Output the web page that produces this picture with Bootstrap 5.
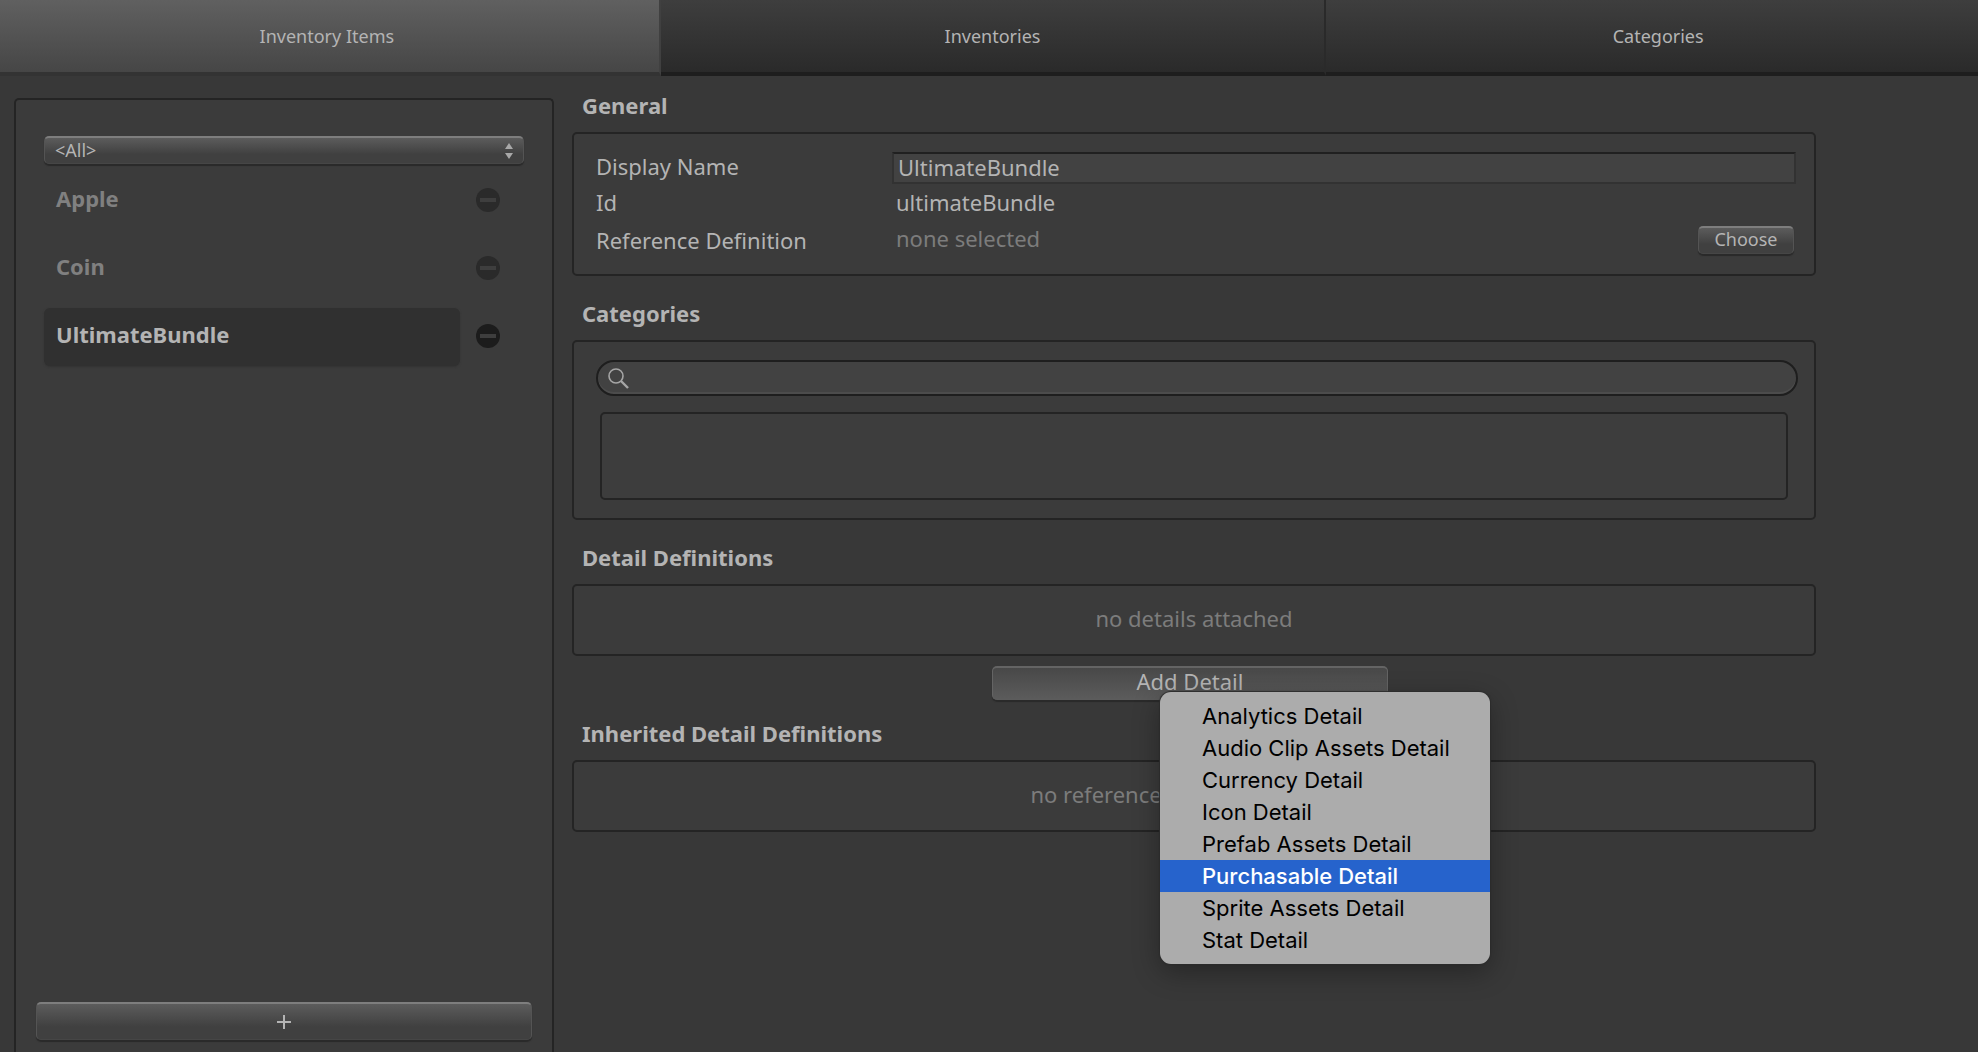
<!DOCTYPE html>
<html lang="en">
<head>
<meta charset="utf-8">
<meta name="viewport" content="width=device-width, initial-scale=1">
<title>Inventory Items</title>
<link href="https://cdn.jsdelivr.net/npm/bootstrap@5.3.0/dist/css/bootstrap.min.css" rel="stylesheet">
<style>
  body { background: #383838; color: #b4b4b4; font-family: "Noto Sans", "Open Sans", sans-serif; font-size: 22px; line-height: 32px; }
  .editor { height: 100vh; }

  /* top tabs */
  .tabbar { margin: 0 -14px 0 -5px; }
  .tabbar .tab-btn { height: 76px; padding: 0; border: 0; border-right: 2px solid #2a2a2a; border-bottom: 4px solid #1e1e1e; color: #b4b4b4; font-size: 18px; line-height: 24px; background: linear-gradient(#3e3e3e, #2a2a2a); }
  .tabbar .tab-btn.active { background: linear-gradient(#606060, #464646); border-right-color: #404040; border-bottom-color: #333; }

  /* framed areas */
  .frame { background: #3b3b3b; border: 2px solid #242424; border-radius: 5px; }
  .sidebar { width: 540px; margin: 22px 18px 0 14px; padding: 36px 20px 12px; border-bottom: 0; border-radius: 5px 5px 0 0; }
  .detail-col { max-width: 1244px; margin-right: 20px; padding-top: 14px; }
  .sect-title { font-size: 22px; line-height: 30px; font-weight: 700; margin: 0 0 12px 10px; }
  .sect { margin-bottom: 22px; }

  /* bevelled controls */
  .bevel { color: #b4b4b4; background: linear-gradient(#5c5c5c, #404040 65%, #404040); border: 1px solid #545454; border-top: 2px solid #7e7e7e; border-bottom-color: #464646; border-radius: 5px; box-shadow: 0 2px 1px #2a2a2a; padding: 0; }
  .bevel:hover { color: #ccc; border-color: #545454; border-top-color: #7e7e7e; }
  .filter { margin: 0 8px 8px; }
  .filter select { height: 28px; padding: 0 10px 2px; font-size: 18px; line-height: 22px; appearance: none; }
  .filter svg { right: 10px; top: 7px; pointer-events: none; }

  .entry { padding: 0 32px 0 8px; margin-bottom: 10px; }
  .entry-name { height: 58px; padding: 0 0 6px 12px; border: 0; border-radius: 6px; background: none; color: #808080; font-weight: 700; text-align: left; margin-right: 16px; }
  .entry-del { border: 0; padding: 0 0 2px; background: none; color: #2a2a2a; line-height: 0; }
  .entry-del line { stroke: #3e3e3e; }
  .entry.selected .entry-name { background: #303030; color: #b4b4b4; box-shadow: 0 1px 2px #333; }
  .entry.selected .entry-del { color: #1c1c1c; }
  .add-item { height: 38px; }

  /* general form */
  .form-frame { padding: 18px 18px 14px 22px; }
  .field-label { width: 296px; flex: none; }
  .field-row { height: 36px; }
  .field-row.first { height: 32px; }
  .field-row.last { height: 40px; }
  .name-input { height: 32px; padding: 0 4px 2px; border: 2px solid #323232; border-top-color: #202020; border-radius: 0; background: #424242; color: #b4b4b4; font-size: 22px; line-height: 26px; }
  .choose { width: 96px; height: 28px; margin-right: 2px; padding-bottom: 4px; font-size: 18px; line-height: 20px; }
  .faint { color: #7c7c7c; }

  /* categories */
  .cat-frame { padding: 18px 16px 18px 22px; }
  .search { height: 36px; border: 2px solid #1e1e1e; border-radius: 18px; background: #424242; box-shadow: inset 0 -2px 0 #4c4c4c; padding: 0 10px; }
  .search input { background: none; border: 0; outline: 0; color: #b4b4b4; font-size: 20px; line-height: 24px; }
  .cat-list { height: 88px; margin: 16px 10px 0 4px; background: #3d3d3d; }

  .empty { height: 72px; padding-bottom: 4px; }
  .add-wrap { width: 396px; margin: 10px 0 18px 420px; }
  .add-btn { height: 34px; padding-bottom: 6px; font-size: 22px; line-height: 24px; background: linear-gradient(#484848, #5c5c5c); border-color: #646464; border-bottom: 0; }

  .popup { display: block; left: 168px; top: 26px; width: 330px; padding: 8px 0; border: 0; border-radius: 11px; background: #acacac; box-shadow: 0 0 1px 1px #2c2c2c, 0 8px 28px #0005; font-family: Inter, sans-serif; }
  .popup .dropdown-item { padding: 0 42px; font-size: 22px; line-height: 32px; color: #000; }
  .popup .dropdown-item.active { background: #2663cc; color: #fff; font-weight: 500; }
</style>
</head>
<body>
<div class="editor d-flex flex-column overflow-hidden">
  <nav class="tabbar nav nav-fill nav-justified flex-nowrap flex-shrink-0" role="tablist" aria-label="Editor sections">
    <button type="button" class="tab-btn nav-item active" role="tab" aria-selected="true">Inventory Items</button>
    <button type="button" class="tab-btn nav-item" role="tab" aria-selected="false">Inventories</button>
    <button type="button" class="tab-btn nav-item" role="tab" aria-selected="false">Categories</button>
  </nav>

  <div class="d-flex flex-grow-1">
    <aside class="sidebar frame flex-shrink-0 d-flex flex-column">
      <div class="filter position-relative">
        <select class="bevel w-100 d-block" aria-label="Filter by category"><option>&lt;All&gt;</option></select>
        <svg class="position-absolute" width="10" height="16" viewBox="0 0 10 16" fill="#a8a8a8" aria-hidden="true"><path d="M5 0 9 6H1zM5 16 9 10H1z"/></svg>
      </div>

      <div class="entry d-flex align-items-center">
        <button type="button" class="entry-name flex-grow-1">Apple</button>
        <button type="button" class="entry-del" aria-label="Remove Apple"><svg width="24" height="24" viewBox="0 0 24 24"><circle cx="12" cy="12" r="12" fill="currentColor"/><line x1="4" y1="12" x2="20" y2="12" stroke-width="4"/></svg></button>
      </div>
      <div class="entry d-flex align-items-center">
        <button type="button" class="entry-name flex-grow-1">Coin</button>
        <button type="button" class="entry-del" aria-label="Remove Coin"><svg width="24" height="24" viewBox="0 0 24 24"><circle cx="12" cy="12" r="12" fill="currentColor"/><line x1="4" y1="12" x2="20" y2="12" stroke-width="4"/></svg></button>
      </div>
      <div class="entry selected d-flex align-items-center">
        <button type="button" class="entry-name flex-grow-1">UltimateBundle</button>
        <button type="button" class="entry-del" aria-label="Remove UltimateBundle"><svg width="24" height="24" viewBox="0 0 24 24"><circle cx="12" cy="12" r="12" fill="currentColor"/><line x1="4" y1="12" x2="20" y2="12" stroke-width="4"/></svg></button>
      </div>

      <button type="button" class="add-item btn bevel w-100 mt-auto d-flex align-items-center justify-content-center" aria-label="Add item">
        <svg width="16" height="16" viewBox="0 0 16 16" stroke="#b4b4b4" stroke-width="2" aria-hidden="true"><path d="M8 1V15M1 8H15"/></svg>
      </button>
    </aside>

    <main class="detail-col flex-grow-1">
      <h2 class="sect-title">General</h2>
      <section class="sect frame form-frame">
        <div class="field-row first d-flex align-items-center">
          <label class="field-label pb-1" for="displayName">Display Name</label>
          <input id="displayName" class="name-input flex-grow-1" type="text" value="UltimateBundle">
        </div>
        <div class="field-row d-flex align-items-center">
          <span class="field-label">Id</span>
          <span class="ps-1">ultimateBundle</span>
        </div>
        <div class="field-row last d-flex align-items-center">
          <span class="field-label">Reference Definition</span>
          <span class="faint ps-1 pb-1 flex-grow-1">none selected</span>
          <button type="button" class="choose btn bevel">Choose</button>
        </div>
      </section>

      <h2 class="sect-title">Categories</h2>
      <section class="sect frame cat-frame">
        <div class="search d-flex align-items-center">
          <svg width="21" height="21" viewBox="0 0 21 21" fill="none" stroke="#a6a6a6" aria-hidden="true"><circle cx="8" cy="8" r="7" stroke-width="1.6"/><path d="M13 13 20 20" stroke-width="2.4"/></svg>
          <input class="flex-grow-1 ms-2" type="text" aria-label="Search categories">
        </div>
        <div class="cat-list frame"></div>
      </section>

      <h2 class="sect-title">Detail Definitions</h2>
      <section class="frame empty faint d-flex align-items-center justify-content-center">no details attached</section>
      <div class="add-wrap position-relative">
        <button type="button" class="add-btn btn bevel w-100 d-block" aria-haspopup="menu" aria-expanded="true">Add Detail</button>
        <div class="popup dropdown-menu show" role="menu">
          <a class="dropdown-item" role="menuitem" href="#">Analytics Detail</a>
          <a class="dropdown-item" role="menuitem" href="#">Audio Clip Assets Detail</a>
          <a class="dropdown-item" role="menuitem" href="#">Currency Detail</a>
          <a class="dropdown-item" role="menuitem" href="#">Icon Detail</a>
          <a class="dropdown-item" role="menuitem" href="#">Prefab Assets Detail</a>
          <a class="dropdown-item active" role="menuitem" href="#">Purchasable Detail</a>
          <a class="dropdown-item" role="menuitem" href="#">Sprite Assets Detail</a>
          <a class="dropdown-item" role="menuitem" href="#">Stat Detail</a>
        </div>
      </div>

      <h2 class="sect-title">Inherited Detail Definitions</h2>
      <section class="frame empty faint d-flex align-items-center justify-content-center">no reference definition selected</section>
    </main>
  </div>
</div>
<script src="https://cdn.jsdelivr.net/npm/bootstrap@5.3.0/dist/js/bootstrap.bundle.min.js"></script>
</body>
</html>
